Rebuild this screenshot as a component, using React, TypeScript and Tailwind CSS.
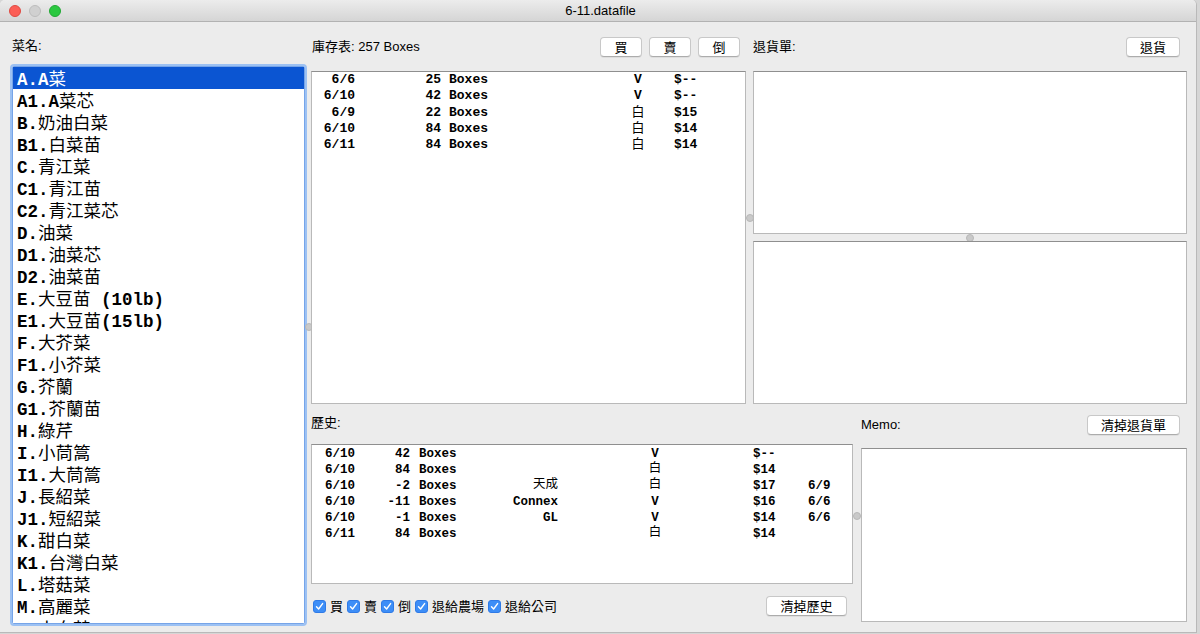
import React from "react";

const CJK = /([\u2E80-\u9FFF\uF900-\uFAFF\u3000-\u303F]+)/;

function Mixed({ t, table }: { t: string; table?: boolean }) {
  const parts = t.split(CJK);
  return (
    <>
      {parts.map((p, i) =>
        i % 2 === 1 ? (
          <span
            key={i}
            className={`font-normal font-['Noto_Sans_CJK_TC',sans-serif] ${
              table ? "inline-block leading-none relative -top-[1px]" : ""
            }`}
          >
            {p}
          </span>
        ) : (
          <span key={i}>{p}</span>
        )
      )}
    </>
  );
}

const items = [
  "A.A菜",
  "A1.A菜芯",
  "B.奶油白菜",
  "B1.白菜苗",
  "C.青江菜",
  "C1.青江苗",
  "C2.青江菜芯",
  "D.油菜",
  "D1.油菜芯",
  "D2.油菜苗",
  "E.大豆苗 (10lb)",
  "E1.大豆苗(15lb)",
  "F.大芥菜",
  "F1.小芥菜",
  "G.芥蘭",
  "G1.芥蘭苗",
  "H.綠芹",
  "I.小茼篙",
  "I1.大茼篙",
  "J.長紹菜",
  "J1.短紹菜",
  "K.甜白菜",
  "K1.台灣白菜",
  "L.塔菇菜",
  "M.高麗菜",
  "N.小白菜",
];

const inventory = [
  ["6/6", "25", "V", "$--"],
  ["6/10", "42", "V", "$--"],
  ["6/9", "22", "白", "$15"],
  ["6/10", "84", "白", "$14"],
  ["6/11", "84", "白", "$14"],
];

const history = [
  ["6/10", "42", "", "V", "$--", ""],
  ["6/10", "84", "", "白", "$14", ""],
  ["6/10", "-2", "天成", "白", "$17", "6/9"],
  ["6/10", "-11", "Connex", "V", "$16", "6/6"],
  ["6/10", "-1", "GL", "V", "$14", "6/6"],
  ["6/11", "84", "", "白", "$14", ""],
];

const ui = "font-['Liberation_Sans','Noto_Sans_CJK_TC',sans-serif] text-[13px] text-black";
const mono = "font-['Liberation_Mono','Noto_Sans_CJK_TC',monospace] font-bold text-black";

function Btn({ label, w }: { label: string; w: string }) {
  return (
    <div
      className={`${w} h-[20px] flex items-center justify-center bg-white border border-[#c8c8c8] border-b-[#acacac] rounded-[4px] shadow-[0_1px_0_rgba(0,0,0,0.06)] ${ui} leading-none`}
    >
      {label}
    </div>
  );
}

function Box({ className, children }: { className: string; children?: React.ReactNode }) {
  return (
    <div className={`bg-white border border-[#b9b9b9] border-t-[#8f8f8f] overflow-hidden ${className}`}>
      {children}
    </div>
  );
}

function Dot() {
  return <div className="w-[8px] h-[8px] rounded-full bg-[#c9c9c9] border border-[#b8b8b8]" />;
}

function Check({ label }: { label: string }) {
  return (
    <div className="flex items-center">
      <div className="w-[13px] h-[13px] rounded-[3px] bg-[#3d8ef7] border border-[#2f7ae6] flex items-center justify-center">
        <svg width="9" height="9" viewBox="0 0 9 9">
          <path d="M1.5 4.8 L3.6 7 L7.6 1.6" fill="none" stroke="white" strokeWidth="1.4" strokeLinecap="round" strokeLinejoin="round" />
        </svg>
      </div>
      <span className={`${ui} ml-[4px] mr-[4px] leading-none`}>{label}</span>
    </div>
  );
}

export default function App() {
  return (
    <div className="w-[1200px] h-[634px] bg-[#d6d6d6] overflow-hidden">
      <div className="w-[1197px] h-[633px] bg-[#ececec] rounded-t-[5px] flex flex-col border-r border-b border-[#b9b9b9] overflow-hidden">
        {/* Title bar */}
        <div className="h-[22px] shrink-0 relative flex items-center bg-gradient-to-b from-[#ececec] to-[#d5d5d5] border-b border-[#b2b2b2]">
          <div className="flex items-center gap-[8px] pl-[9px]">
            <div className="w-[12px] h-[12px] rounded-full bg-[#fc5f57] border border-[#de4a42]" />
            <div className="w-[12px] h-[12px] rounded-full bg-[#d0d0d0] border border-[#bcbcbc]" />
            <div className="w-[12px] h-[12px] rounded-full bg-[#2bc840] border border-[#22a834]" />
          </div>
          <div className={`flex-1 text-center -ml-[56px] ${ui} text-[#4a4a4a] leading-none`}>6-11.datafile</div>
        </div>

        {/* Body */}
        <div className="flex-1 flex pl-[10px]">
          {/* Left column */}
          <div className="w-[297px] flex flex-col pt-[16px]">
            <div className={`${ui} leading-[16px] pl-[2px]`}>菜名:</div>
            <div className="mt-[10px] h-[562px] border-[2px] border-[#9cc1f3] rounded-[4px] bg-white overflow-hidden">
              <div className="h-full border border-[#76a4e8] overflow-hidden">
                {items.map((it, i) => (
                  <div
                    key={i}
                    className={`h-[22px] leading-[22px] pl-[4px] whitespace-pre text-[17.5px] ${mono} ${
                      i === 0 ? "bg-[#0b55d2] text-white" : ""
                    }`}
                  >
                    <span className={i === 0 ? "text-white" : ""}>
                      <Mixed t={it} />
                    </span>
                  </div>
                ))}
              </div>
            </div>
          </div>

          {/* Splitter */}
          <div className="w-[4px] flex items-center">
            <div className="-ml-[2px]">
              <Dot />
            </div>
          </div>

          {/* Right area */}
          <div className="w-[876px] flex flex-col pt-[15px]">
            {/* Top section */}
            <div className="flex">
              {/* Inventory */}
              <div className="w-[435px] flex flex-col">
                <div className="h-[20px] flex items-center justify-between pr-[6px]">
                  <span className={`${ui} pl-[1px]`}>庫存表: 257 Boxes</span>
                  <div className="flex gap-[7px]">
                    <Btn label="買" w="w-[42px]" />
                    <Btn label="賣" w="w-[42px]" />
                    <Btn label="倒" w="w-[42px]" />
                  </div>
                </div>
                <Box className="mt-[14px] h-[333px]">
                  {inventory.map((r, i) => (
                    <div key={i} className={`flex h-[16.3px] leading-[16.3px] whitespace-pre text-[13px] ${mono}`}>
                      <span className="w-[43px] text-right">{r[0]}</span>
                      <span className="w-[86px] text-right">{r[1]}</span>
                      <span className="w-[179px] pl-[8px]">Boxes</span>
                      <span className="w-[36px] text-center">
                        <Mixed t={r[2]} table />
                      </span>
                      <span className="pl-[18px]">{r[3]}</span>
                    </div>
                  ))}
                </Box>
              </div>

              {/* Splitter */}
              <div className="w-[7px] flex flex-col pt-[177px] items-center">
                <Dot />
              </div>

              {/* Return list */}
              <div className="w-[434px] flex flex-col">
                <div className="h-[20px] flex items-center justify-between pr-[7px]">
                  <span className={ui}>退貨單:</span>
                  <Btn label="退貨" w="w-[54px]" />
                </div>
                <Box className="mt-[14px] h-[163px]" />
                <div className="h-[7px] flex items-center justify-center">
                  <Dot />
                </div>
                <Box className="h-[163px]" />
              </div>
            </div>

            {/* Bottom section */}
            <div className="flex">
              {/* History */}
              <div className="w-[542px] flex flex-col pt-[11px]">
                <div className={`${ui} leading-[16px]`}>歷史:</div>
                <Box className="mt-[13px] h-[140px] pt-[1px]">
                  {history.map((r, i) => (
                    <div key={i} className={`flex h-[16px] leading-[16px] whitespace-pre text-[12.5px] ${mono}`}>
                      <span className="w-[43px] text-right">{r[0]}</span>
                      <span className="w-[55px] text-right">{r[1]}</span>
                      <span className="w-[50px] pl-[9px]">Boxes</span>
                      <span className="w-[98px] text-right">
                        <Mixed t={r[2]} table />
                      </span>
                      <span className="ml-[77px] w-[40px] text-center">
                        <Mixed t={r[3]} table />
                      </span>
                      <span className="ml-[78px] w-[55px]">{r[4]}</span>
                      <span>{r[5]}</span>
                    </div>
                  ))}
                </Box>
                <div className="mt-[12px] h-[20px] flex items-center justify-between pr-[6px]">
                  <div className="flex items-center pl-[2px]">
                    <Check label="買" />
                    <Check label="賣" />
                    <Check label="倒" />
                    <Check label="退給農場" />
                    <Check label="退給公司" />
                  </div>
                  <Btn label="清掉歷史" w="w-[81px]" />
                </div>
              </div>

              {/* Splitter */}
              <div className="w-[8px] flex flex-col items-center pt-[108px]">
                <Dot />
              </div>

              {/* Memo */}
              <div className="w-[326px] flex flex-col pt-[11px]">
                <div className="h-[20px] flex items-center justify-between pr-[7px]">
                  <span className={ui}>Memo:</span>
                  <Btn label="清掉退貨單" w="w-[93px]" />
                </div>
                <Box className="mt-[13px] h-[174px]" />
              </div>
            </div>
          </div>
        </div>
      </div>
    </div>
  );
}
